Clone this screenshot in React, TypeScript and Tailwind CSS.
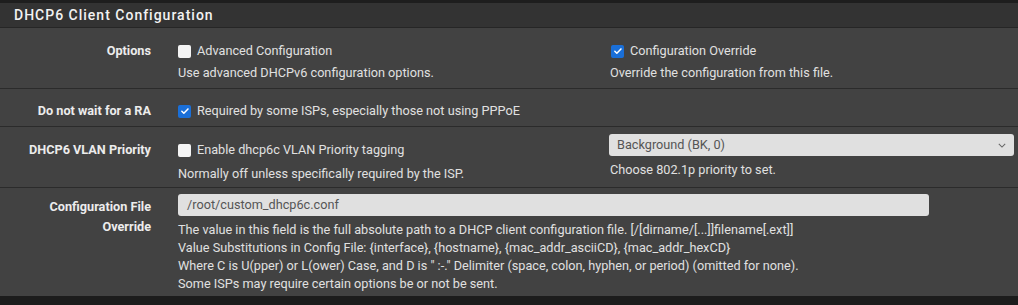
import React from "react";

function Box({ checked }: { checked?: boolean }) {
  return checked ? (
    <span className="inline-flex h-[13px] w-[13px] shrink-0 items-center justify-center rounded-[2px] bg-[#1a6fd8]">
      <svg viewBox="0 0 12 12" className="h-[10px] w-[10px]" fill="none">
        <path d="M2.2 6.3l2.4 2.4 5-5.2" stroke="#fff" strokeWidth="1.8" strokeLinecap="round" strokeLinejoin="round" />
      </svg>
    </span>
  ) : (
    <span className="inline-block h-[13px] w-[13px] shrink-0 rounded-[2px] bg-[#f4f4f4]" />
  );
}

function Check({ checked, label }: { checked?: boolean; label: string }) {
  return (
    <div className="flex h-[20px] items-center gap-[6px]">
      <Box checked={checked} />
      <span>{label}</span>
    </div>
  );
}

function Label({ children }: { children: React.ReactNode }) {
  return (
    <div className="w-[166px] shrink-0 pr-[15px] text-right font-bold leading-[20px] text-[#ececec]">
      {children}
    </div>
  );
}

export default function App() {
  return (
    <div
      className="h-[305px] w-[1018px] overflow-hidden bg-[#1c1c1c] text-[12.7px] text-[#e0e0e0]"
      style={{ fontFamily: "Roboto, 'Liberation Sans', sans-serif" }}
    >
      <div className="h-[3px] bg-[#1e1e1e]" />
      <div className="flex h-[25px] items-center border-b border-[#262626] bg-[#333333] pl-[14px] text-[14px] font-medium tracking-[1px] text-[#f2f2f2]">
        DHCP6 Client Configuration
      </div>

      <div className="bg-[#424242]">
        {/* Options */}
        <div className="flex h-[61px] border-b border-[#2b2b2b] pt-[13px]">
          <Label>Options</Label>
          <div className="ml-[12px] w-[431px]">
            <Check label="Advanced Configuration" />
            <div className="mt-[2px] leading-[20px]">Use advanced DHCPv6 configuration options.</div>
          </div>
          <div>
            <div className="pl-[2px]">
              <Check checked label="Configuration Override" />
            </div>
            <div className="mt-[2px] pl-[1px] leading-[20px]">Override the configuration from this file.</div>
          </div>
        </div>

        {/* RA */}
        <div className="flex h-[38px] border-b border-[#2b2b2b] pt-[12px]">
          <Label>Do not wait for a RA</Label>
          <div className="ml-[12px]">
            <Check checked label="Required by some ISPs, especially those not using PPPoE" />
          </div>
        </div>

        {/* VLAN priority */}
        <div className="flex h-[61px] border-b border-[#2b2b2b]">
          <div className="pt-[13px]">
            <Label>DHCP6 VLAN Priority</Label>
          </div>
          <div className="ml-[12px] w-[431px] pt-[13px]">
            <Check label="Enable dhcp6c VLAN Priority tagging" />
            <div className="mt-[4px] leading-[20px]">Normally off unless specifically required by the ISP.</div>
          </div>
          <div className="w-[405px] pt-[7px]">
            <div className="flex h-[22px] items-center justify-between rounded-[3px] bg-[#e0e0e0] pl-[8px] pr-[8px] text-[#555]">
              <span>Background (BK, 0)</span>
              <svg viewBox="0 0 10 6" className="h-[5px] w-[8px]" fill="none">
                <path d="M1 1l4 4 4-4" stroke="#666" strokeWidth="1.3" />
              </svg>
            </div>
            <div className="mt-[4px] pl-[1px] leading-[20px]">Choose 802.1p priority to set.</div>
          </div>
        </div>

        {/* Config file override */}
        <div className="flex h-[108px]">
          <div className="pt-[9px]">
            <Label>
              Configuration File
              <br />
              Override
            </Label>
          </div>
          <div className="ml-[12px] pt-[6px]">
            <div className="flex h-[22px] w-[751px] items-center rounded-[3px] bg-[#e0e0e0] pl-[9px] text-[#555]">
              /root/custom_dhcp6c.conf
            </div>
            <div className="mt-[5px] leading-[18px]">
              <div>The value in this field is the full absolute path to a DHCP client configuration file. [/[dirname/[...]]filename[.ext]]</div>
              <div>Value Substitutions in Config File: {"{interface}, {hostname}, {mac_addr_asciiCD}, {mac_addr_hexCD}"}</div>
              <div>Where C is U(pper) or L(ower) Case, and D is " :-." Delimiter (space, colon, hyphen, or period) (omitted for none).</div>
              <div>Some ISPs may require certain options be or not be sent.</div>
            </div>
          </div>
        </div>
      </div>
    </div>
  );
}
